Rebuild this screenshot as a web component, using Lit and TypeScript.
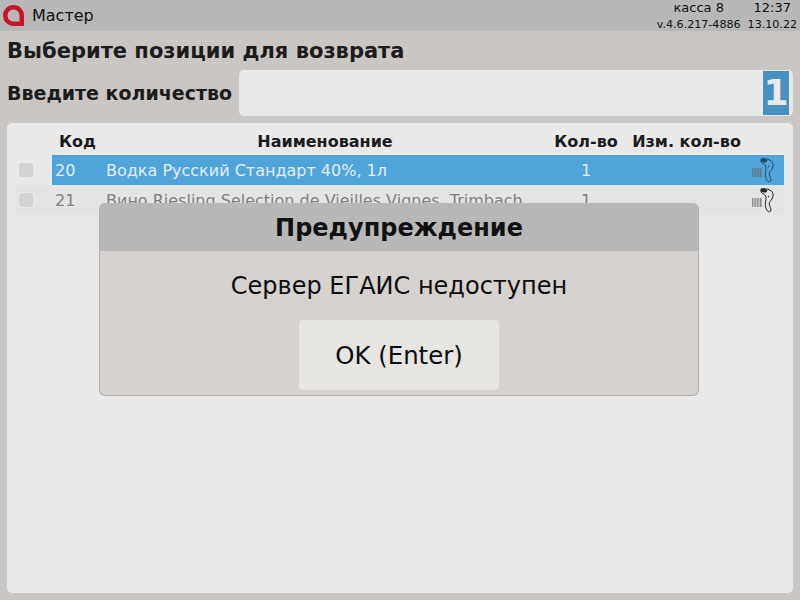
import { LitElement, html, css, svg } from "lit";
import { customElement } from "lit/decorators.js";

const scanner = svg`<svg class="scan" width="22" height="26" viewBox="0 0 22 26" fill="none">
  <g fill="#666" opacity="0.7"><rect x="0" y="11" width="1" height="9"/><rect x="1.6" y="11" width="1" height="9"/><rect x="3.2" y="11" width="1" height="9"/><rect x="4.8" y="11" width="1" height="9"/><rect x="6.4" y="11" width="1" height="9"/><rect x="8" y="11" width="1.6" height="9"/></g>
  <path d="M9 2 C12 1 17 2 19.5 4 C21.5 6 21.5 9.5 20 12 C18.8 14 17 15 17.2 17 C17.5 19 19 21.5 19 23 C19 24.8 16.5 25.2 15.5 24 C14 22 13 19.5 13.4 16.5 C13.8 13.5 14.5 11 13.5 8.5 C12 7 9.5 6 9 5 Z" stroke="var(--ic)" stroke-width="1"/>
  <path d="M9 2 C11 1.5 14 2 15.5 3.5 L14 5.5 C12 5.5 10 5 9 4.5 Z" fill="var(--ic)"/>
  <circle cx="16.5" cy="9.5" r="0.7" fill="var(--ic)"/>
</svg>`;

@customElement("app-root")
export class AppRoot extends LitElement {
  static styles = css`
    :host { display: block; width: 800px; height: 600px; position: relative; overflow: hidden;
      background: #cac6c3; font-family: "DejaVu Sans", sans-serif; color: #1c1c1c; }
    .top { height: 31px; background: #b8b8b8; display: flex; align-items: center; padding: 0 3px; position: relative; }
    .logo { display: block; margin-right: 8px; }
    .mname { font-size: 16px; color: #111; }
    .info { margin-left: auto; padding-top: 2px; display: grid; grid-template-columns: auto auto; column-gap: 7px; font-size: 11.1px; color: #111; line-height: 17px; text-align: center; }
    .info .k { font-size: 13px; line-height: 16px; }
    .title { font-size: 21px; font-weight: 700; height: 39px; line-height: 40px; padding-left: 7px; }
    .qty { display: flex; align-items: center; gap: 7px; padding: 0 7px; height: 46px; }
    .qty label { font-size: 19px; font-weight: 700; white-space: nowrap; }
    .input { flex: 1; height: 46px; background: #e9e9e9; border-radius: 5px; display: flex; justify-content: flex-end; align-items: center; padding-right: 4px; }
    .sel { background: #4790c0; color: #e9e9e9; font-size: 36px; font-weight: 700; height: 44px; line-height: 44px; width: 26px; text-align: center; overflow: hidden; }
    .card { margin: 7px 7px 0; height: 470px; background: #e9e9e9; border-radius: 5px; padding: 8px 9px; box-sizing: border-box; }
    .row { display: grid; grid-template-columns: 36px 54px 443px 74px 1fr; height: 30px; align-items: center; font-size: 16px; }
    .head { display: grid; grid-template-columns: 36px 51px 444px 78px 123px 1fr; height: 24px; line-height: 21px; font-weight: 700; color: #1c1c1c; font-size: 16px; }
    .head span { text-align: center; white-space: nowrap; }
    .cell { height: 30px; line-height: 31px; white-space: nowrap; overflow: hidden; }
    .cb-wrap { height: 30px; display: flex; align-items: center; padding-left: 3px; }
    .cb { width: 14px; height: 14px; border-radius: 3px; background: #d2d2d0; }
    .code { padding-left: 3px; }
    .c { text-align: center; }
    .r { display: flex; justify-content: flex-end; align-items: center; padding-right: 10px; }
    .s { --ic: #1d4a66; color: #e3eef6; }
    .s .cell { background: #4fa5da; }
    .n { --ic: #222; background: #e4e4e4; color: #808080; }
    .modal { position: absolute; left: 99px; top: 203px; width: 600px; height: 193px; box-sizing: border-box; border: 1px solid #b3aeaa; border-top: 0; border-radius: 6px; background: #d6d2cf; overflow: hidden; display: flex; flex-direction: column; align-items: center; }
    .mh { align-self: stretch; margin: 0 -1px; height: 48px; background: #b8b8b8; text-align: center; line-height: 50px; font-size: 24px; font-weight: 700; color: #111; flex: none; }
    .msg { font-size: 24px; color: #0c0c0c; height: 69px; line-height: 70px; }
    .btn { width: 200px; height: 70px; border-radius: 4px; background: #e6e5e2; font-size: 24.4px; line-height: 72px; text-align: center; color: #0c0c0c; }
  `;

  render() {
    return html`
      <div class="top">
        <svg class="logo" width="21" height="21" viewBox="0 0 21 21">
          <path d="M10.5 2.25 C5.5 2.25 2.25 6 2.25 10.5 C2.25 15 5.5 18.75 10.5 18.75 L18.75 18.75 L18.75 10.5 C18.75 6 15.5 2.25 10.5 2.25 Z" fill="none" stroke="#c8142a" stroke-width="4.5"/>
        </svg>
        <span class="mname">Мастер</span>
        <div class="info">
          <span class="k">касса 8</span><span class="k">12:37</span>
          <span>v.4.6.217-4886</span><span>13.10.22</span>
        </div>
      </div>
      <div class="title">Выберите позиции для возврата</div>
      <div class="qty"><label>Введите количество</label><div class="input"><div class="sel">1</div></div></div>
      <div class="card">
        <div class="head"><span></span><span>Код</span><span>Наименование</span><span>Кол-во</span><span>Изм. кол-во</span><span></span></div>
        <div class="row s">
          <div class="cb-wrap"><div class="cb"></div></div>
          <div class="cell code">20</div><div class="cell">Водка Русский Стандарт 40%, 1л</div><div class="cell c">1</div><div class="cell r">${scanner}</div>
        </div>
        <div class="row n">
          <div class="cb-wrap"><div class="cb"></div></div>
          <div class="cell code">21</div><div class="cell">Вино Riesling Selection de Vieilles Vignes, Trimbach</div><div class="cell c">1</div><div class="cell r">${scanner}</div>
        </div>
      </div>
      <div class="modal">
        <div class="mh">Предупреждение</div>
        <div class="msg">Сервер ЕГАИС недоступен</div>
        <div class="btn">OK (Enter)</div>
      </div>
    `;
  }
}
